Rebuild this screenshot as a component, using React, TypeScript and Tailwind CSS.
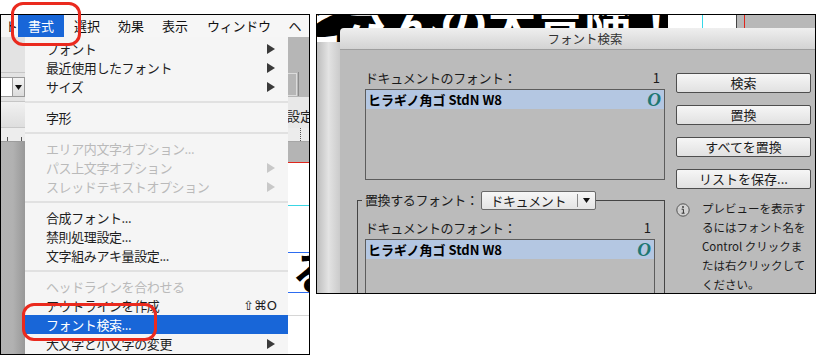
import clsx from 'clsx';

const jp = "font-['Noto_Sans_CJK_JP',sans-serif]";

function Arrow({ dim }: { dim?: boolean }) {
  return (
    <svg width="8" height="10" viewBox="0 0 8 10">
      <path d="M0 0 L8 5 L0 10 Z" fill={dim ? '#c8c8c8' : '#3a3a3a'} />
    </svg>
  );
}

function MenuItem({
  label,
  arrow,
  dim,
  shortcut,
  active,
}: {
  label: string;
  arrow?: boolean;
  dim?: boolean;
  shortcut?: string;
  active?: boolean;
}) {
  return (
    <div
      className={clsx(
        'h-[19px] flex items-center pl-[21px] pr-[13px] text-[13px] leading-[19px] whitespace-nowrap',
        active ? 'bg-[#1866d8] text-white' : dim ? 'text-[#bababa]' : 'text-[#1e1e1e]'
      )}
    >
      <span className="flex-1 tracking-[-0.4px]">{label}</span>
      {shortcut && (
        <span className="-mr-[2px] font-['DejaVu_Sans','Noto_Sans_CJK_JP',sans-serif] text-[13px] text-[#1e1e1e]">
          {shortcut}
        </span>
      )}
      {arrow && <Arrow dim={dim} />}
    </div>
  );
}

function Sep() {
  return (
    <div className="h-[12px] flex items-center">
      <div className="h-[2px] w-full bg-[#e1e1e1]" />
    </div>
  );
}

function MenuPanel() {
  return (
    <div className="w-[310px] h-[341px] border border-black flex flex-col overflow-hidden bg-white">
      {/* menu bar */}
      <div className="h-[22px] bg-[#f6f6f6] flex items-center text-[13px] leading-[22px] text-[#111] whitespace-nowrap">
        <span className="w-[24px] pl-[4px]">ト</span>
        <span className="h-full px-[10px] bg-[#1866d8] text-white">書式</span>
        <span className="px-[10px]">選択</span>
        <span className="px-[8px]">効果</span>
        <span className="px-[10px]">表示</span>
        <span className="px-[9px] tracking-[-0.3px]">ウィンドウ</span>
        <span className="px-[9px]">ヘ</span>
      </div>

      <div className="flex-1 flex">
        {/* app behind, left side */}
        <div className="w-[24px] flex flex-col">
          <div className="h-[36px] bg-[#e3e3e3] border-b border-[#c6c6c6]" />
          <div className="h-[29px] bg-[#e3e3e3] flex items-center border-b border-[#c6c6c6]">
            <div className="h-[20px] w-[11px] bg-white border-y border-[#9a9a9a]" />
            <div className="h-[20px] w-[13px] bg-linear-to-b from-[#f3f3f3] to-[#dcdcdc] border border-[#9a9a9a] flex items-center justify-center">
              <svg width="7" height="5" viewBox="0 0 7 5">
                <path d="M0 0 H7 L3.5 5 Z" fill="#111" />
              </svg>
            </div>
          </div>
          <div className="h-[26px] bg-linear-to-b from-[#f1f1f1] to-[#dedede] border-b border-[#c8c8c8]" />
          <div className="h-[14px] bg-[#ededed] border-b border-[#9c9c9c] flex items-end">
            <div className="ml-[6px] w-px h-[4px] bg-[#555]" />
            <div className="ml-[13px] w-px h-[4px] bg-[#555]" />
          </div>
          <div className="flex-1 bg-linear-to-r from-[#b3b3b3] via-[#b1b1b1] to-[#989898]" />
        </div>

        {/* dropdown menu */}
        <div className="w-[263px] bg-[#f5f5f5] pt-[2px] flex flex-col">
          <MenuItem label="フォント" arrow />
          <MenuItem label="最近使用したフォント" arrow />
          <MenuItem label="サイズ" arrow />
          <Sep />
          <MenuItem label="字形" />
          <Sep />
          <MenuItem label="エリア内文字オプション..." dim />
          <MenuItem label="パス上文字オプション" dim arrow />
          <MenuItem label="スレッドテキストオプション" dim arrow />
          <Sep />
          <MenuItem label="合成フォント..." />
          <MenuItem label="禁則処理設定..." />
          <MenuItem label="文字組みアキ量設定..." />
          <Sep />
          <MenuItem label="ヘッドラインを合わせる" dim />
          <MenuItem label="アウトラインを作成" shortcut="⇧⌘O" />
          <MenuItem label="フォント検索..." active />
          <MenuItem label="大文字と小文字の変更" arrow />
        </div>

        {/* app behind, right side */}
        <div className="flex-1 flex flex-col overflow-hidden">
          <div className="h-[60px] bg-[#b6b6b6] flex items-end pb-[1px]">
            <div className="h-[23px] w-[9px] border border-l-0 border-[#dcdcdc]" />
            <div className="ml-[1px] h-[24px] w-px bg-[#8c8c8c]" />
          </div>
          <div className="h-[31px] bg-[#e8e8e8] pt-[9px] -ml-[1px] text-[13px] leading-[19px] text-[#222] whitespace-nowrap">
            設定
          </div>
          <div className="h-[14px] bg-[#ececec] border-b border-[#a6a6a6] flex">
            <div className="ml-[12px] h-full border-l border-dotted border-[#555]" />
          </div>
          <div className="h-[21px] bg-[#b4b4b4] border-b border-[#e0261c]" />
          <div className="flex-1 bg-white flex flex-col">
            <div className="mt-[42px] h-px bg-[#3ad6e4]" />
            <div className="mt-[46px] h-px bg-[#2d6cf0]" />
            <div className="h-[39px] overflow-hidden">
              <div className="ml-[4px] -mt-[6px] text-[44px] leading-[48px] font-bold text-black">る</div>
            </div>
            <div className="h-px bg-[#2d6cf0]" />
            <div className="mt-[22px] h-px bg-[#d6d6d6]" />
          </div>
        </div>
      </div>
    </div>
  );
}

function Btn({ label }: { label: string }) {
  return (
    <div className="h-[20px] border border-[#4e4e4e] rounded-[2px] bg-linear-to-b from-[#f6f6f6] to-[#e1e1e1] text-center text-[13px] leading-[18px] text-[#1a1a1a]">
      {label}
    </div>
  );
}

function OpenTypeO() {
  return (
    <span className="font-['Liberation_Serif',serif] italic font-bold text-[19px] leading-[19px] text-[#1e7772]">
      O
    </span>
  );
}

function FontList({ className }: { className?: string }) {
  return (
    <div className={clsx('border border-[#5c5c5c]', className)}>
      <div className="h-[19px] bg-[#b4c7e2] flex items-center justify-between pl-[2px] pr-[3px]">
        <span className="font-bold text-[13px] leading-[19px] text-black">ヒラギノ角ゴ StdN W8</span>
        <OpenTypeO />
      </div>
    </div>
  );
}

function InfoIcon() {
  return (
    <svg width="14" height="14" viewBox="0 0 14 14" className="mt-[4px] shrink-0">
      <circle cx="7" cy="7" r="6.2" fill="#d2d2d2" stroke="#555" strokeWidth="1" />
      <circle cx="7" cy="4" r="0.9" fill="#333" />
      <path d="M5.6 6.2 H7.4 V10 M5.6 10.2 H8.6" stroke="#333" strokeWidth="1" fill="none" />
    </svg>
  );
}

function Dialog() {
  return (
    <div className="absolute left-[23px] top-[13px] w-[490px] bottom-0 flex flex-col rounded-t-[4px] overflow-hidden">
      <div className="h-[22px] bg-linear-to-b from-[#efefef] to-[#d3d3d3] border-b border-[#9e9e9e] text-center text-[12.5px] leading-[21px] text-[#333]">
        フォント検索
      </div>
      <div className="flex-1 bg-[#bbbbbb] flex pl-[25px] pt-[19px] text-[#1a1a1a]">
        {/* left column */}
        <div className="w-[300px] flex flex-col">
          <div className="h-[18px] flex items-center justify-between pr-[5px] text-[13px] leading-[18px]">
            <span className="tracking-[-0.4px]">ドキュメントのフォント：</span>
            <span>1</span>
          </div>
          <FontList className="mt-[2px] h-[91px]" />

          <div className="mt-[20px] -ml-[8px] w-[308px] flex-1 border-x border-[#444] flex flex-col">
            <div className="-mt-[10px] h-[20px] flex items-center">
              <div className="w-[4px] h-px bg-[#444]" />
              <span className="px-[3px] text-[13px] leading-[18px] tracking-[-0.4px] whitespace-nowrap">
                置換するフォント：
              </span>
              <div className="h-[19px] w-[115px] border border-[#6a6a6a] rounded-[2px] bg-linear-to-b from-[#f7f7f7] to-[#e4e4e4] flex items-center">
                <span className="pl-[8px] flex-1 text-[13px] leading-[17px] tracking-[-0.4px]">ドキュメント</span>
                <div className="w-px h-[13px] bg-[#8a8a8a]" />
                <div className="w-[17px] flex justify-center">
                  <svg width="7" height="5" viewBox="0 0 7 5">
                    <path d="M0 0 H7 L3.5 5 Z" fill="#111" />
                  </svg>
                </div>
              </div>
              <div className="flex-1 h-px bg-[#444]" />
            </div>
            <div className="flex-1 flex flex-col pl-[7px] pr-[9px]">
              <div className="mt-[9px] h-[18px] flex items-center justify-between pr-[4px] text-[13px] leading-[18px]">
                <span className="tracking-[-0.4px]">ドキュメントのフォント：</span>
                <span>1</span>
              </div>
              <FontList className="mt-[2px] flex-1" />
            </div>
          </div>
        </div>

        {/* right column */}
        <div className="ml-[11px] w-[135px] mt-[4px] flex flex-col gap-[12px]">
          <Btn label="検索" />
          <Btn label="置換" />
          <Btn label="すべてを置換" />
          <Btn label="リストを保存..." />
          <div className="-mt-[2px] flex items-start">
            <InfoIcon />
            <p className="ml-[12px] text-[11.5px] leading-[19px] text-[#1a1a1a] whitespace-nowrap">
              プレビューを表示す
              <br />
              るにはフォント名を
              <br />
              Control クリックま
              <br />
              たは右クリックして
              <br />
              ください。
            </p>
          </div>
        </div>
      </div>
    </div>
  );
}

function FindFontPanel() {
  return (
    <div className="relative w-[500px] h-[280px] border border-black overflow-hidden flex flex-col">
      {/* artboard behind the dialog */}
      <div className="h-[27px] flex overflow-hidden">
        <div className="w-[351px] bg-black overflow-hidden">
          <div className="-ml-[21px] -mt-[19px] whitespace-nowrap text-white font-bold text-[48px] leading-[48px]">
            とさんの大冒険！
          </div>
        </div>
        <div className="w-[34px] bg-white" />
        <div className="w-px bg-[#35d8e8]" />
        <div className="w-[33px] bg-white" />
        <div className="w-px bg-[#444]" />
        <div className="w-[7px] bg-[#b8b8b8]" />
        <div className="w-px bg-[#e0261c]" />
        <div className="flex-1 bg-[#b8b8b8]" />
      </div>
      <div className="flex-1 flex">
        <div className="w-[23px] bg-linear-to-r from-[#bdbdbd] via-[#e3e3e3] to-[#cbcbcb]" />
        <div className="flex-1 bg-[#bbbbbb]" />
      </div>
      <Dialog />
    </div>
  );
}

export default function App() {
  return (
    <div className={clsx(jp, 'relative w-[816px] h-[356px] bg-white flex items-start gap-[6px] pt-[14px]')}>
      <MenuPanel />
      <FindFontPanel />

      {/* red call-out marks */}
      <div className="absolute left-[11px] top-[2px] w-[70px] h-[44px] border-[3px] border-[#ea2a1e] rounded-[12px]" />
      <div className="absolute left-[22px] top-[303px] w-[135px] h-[38px] border-[3px] border-[#ea2a1e] rounded-[12px]" />
    </div>
  );
}
